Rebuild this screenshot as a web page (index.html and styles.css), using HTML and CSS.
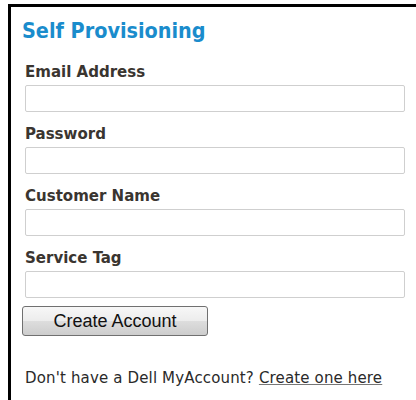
FILE: index.html
```html
<!DOCTYPE html>
<html lang="en">
<head>
<meta charset="utf-8">
<title>Self Provisioning</title>
<link rel="stylesheet" href="styles.css">
</head>
<body>
<div class="panel">
  <h1 class="title">Self Provisioning</h1>
  <form class="form">
    <label class="field">
      <span class="label">Email Address</span>
      <input class="input" type="text">
    </label>
    <label class="field">
      <span class="label">Password</span>
      <input class="input" type="password">
    </label>
    <label class="field">
      <span class="label">Customer Name</span>
      <input class="input" type="text">
    </label>
    <label class="field">
      <span class="label">Service Tag</span>
      <input class="input" type="text">
    </label>
    <button class="btn" type="button">Create Account</button>
  </form>
  <p class="note">Don't have a Dell MyAccount? <a class="link" href="#">Create one here</a></p>
</div>
</body>
</html>
```
FILE: styles.css
```css
html, body {
  margin: 0;
  padding: 0;
  background: #fff;
}

.panel {
  margin: 4px 0 0 8px;
  border-top: 3px solid #000;
  border-left: 3px solid #000;
  padding: 10px 0 0 11px;
  height: 400px;
  box-sizing: border-box;
  font-family: "DejaVu Sans", sans-serif;
}

.title {
  margin: 0;
  font-family: "DejaVu Sans Condensed", "DejaVu Sans", sans-serif;
  font-stretch: condensed;
  font-size: 21.4px;
  font-weight: bold;
  color: #1a8ccc;
  line-height: 28px;
}

.form {
  display: flex;
  flex-direction: column;
  align-items: flex-start;
  padding-left: 3px;
  margin-top: 16px;
}

.field {
  display: flex;
  flex-direction: column;
  width: 380px;
}

.field + .field {
  margin-top: 11px;
}

.label {
  font-family: "DejaVu Sans Condensed", "DejaVu Sans", sans-serif;
  font-stretch: condensed;
  font-size: 16.7px;
  font-weight: bold;
  color: #3a3530;
  line-height: 20px;
  margin-bottom: 4px;
}

.input {
  height: 27px;
  box-sizing: border-box;
  border: 1px solid #cfcfcf;
  border-radius: 2px;
  margin: 0;
  background: #fff;
}

.btn {
  margin: 8px 0 0 -3px;
  width: 186px;
  height: 30px;
  border: 1px solid #707070;
  border-radius: 3px;
  background: linear-gradient(#f7f7f7 0%, #ececec 50%, #dddddd 51%, #cdcdcd 100%);
  font-family: "Liberation Sans", Arial, sans-serif;
  font-size: 18px;
  color: #111;
  padding: 0;
}

.note {
  margin: 33px 0 0 3px;
  font-size: 15px;
  letter-spacing: 0.15px;
  color: #2a2a2a;
}

.link {
  color: #2a2a2a;
  text-decoration: underline;
  text-decoration-color: #777;
}
```
